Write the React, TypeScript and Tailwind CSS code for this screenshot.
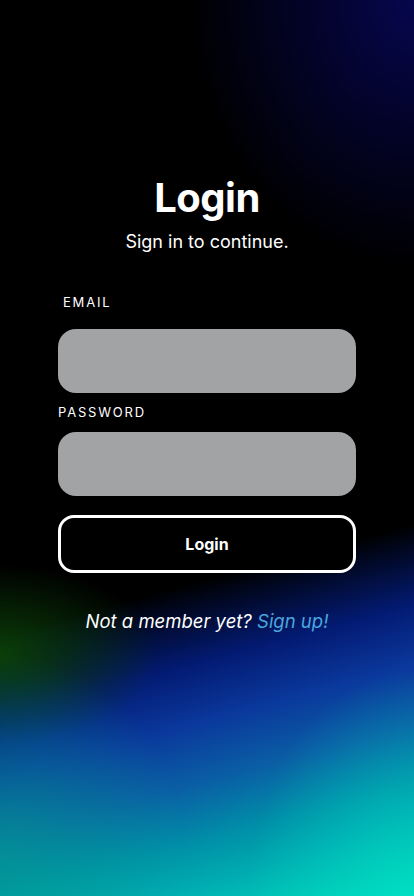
import React, { useState } from 'react';

export default function App() {
  const [email, setEmail] = useState('');
  const [password, setPassword] = useState('');

  return (
    <div
      className="relative min-h-[896px] w-full overflow-hidden bg-black font-['Inter','Liberation_Sans',sans-serif] text-white"
    >
      {/* background glow */}
      <div className="pointer-events-none absolute inset-0 bg-[radial-gradient(ellipse_55%_30%_at_100%_0%,#06064e_0%,rgba(6,6,78,0)_100%),radial-gradient(ellipse_38%_10%_at_0%_73%,#0a3e08_0%,rgba(10,62,8,0)_100%),linear-gradient(165deg,#000_0%,#000_63%,#031a72_71%,#0a389c_77%,#0a5ea4_83%,#0090a8_89%,#00b8b4_95%,#00d8bc_100%)]" />
      <div className="pointer-events-none absolute inset-0 bg-[radial-gradient(ellipse_45%_22%_at_0%_95%,rgba(0,170,140,0.55)_0%,rgba(0,170,140,0)_100%),radial-gradient(ellipse_40%_25%_at_100%_100%,rgba(0,230,200,0.5)_0%,rgba(0,230,200,0)_100%)]" />

      <div className="relative flex flex-col items-center pt-[172px]">
        <h1 className="text-[40px] font-bold leading-[52px] tracking-[-0.5px]">Login</h1>
        <p className="mt-[6px] text-[18px] leading-[24px]">Sign in to continue.</p>

        <form
          className="mt-[40px] flex w-[298px] flex-col"
          onSubmit={(e) => e.preventDefault()}
        >
          <label className="ml-[5px] text-[13px] leading-[16px] tracking-[1.8px]">EMAIL</label>
          <input
            type="email"
            value={email}
            onChange={(e) => setEmail(e.target.value)}
            className="mt-[19px] h-[64px] w-full rounded-[18px] bg-[#a2a3a5] px-4 text-[16px] text-black outline-none"
          />
          <label className="mt-[11px] text-[13px] leading-[16px] tracking-[1.8px]">PASSWORD</label>
          <input
            type="password"
            value={password}
            onChange={(e) => setPassword(e.target.value)}
            className="mt-[12px] h-[64px] w-full rounded-[18px] bg-[#a2a3a5] px-4 text-[16px] text-black outline-none"
          />
          <button
            type="submit"
            className="mt-[19px] h-[58px] w-full rounded-[16px] border-[3px] border-white bg-black text-[16px] font-bold"
          >
            Login
          </button>
        </form>

        <p className="mt-[36px] text-[18.5px] italic leading-[24px]">
          Not a member yet? <span className="text-[#4aa6dc]">Sign up!</span>
        </p>
      </div>
    </div>
  );
}
